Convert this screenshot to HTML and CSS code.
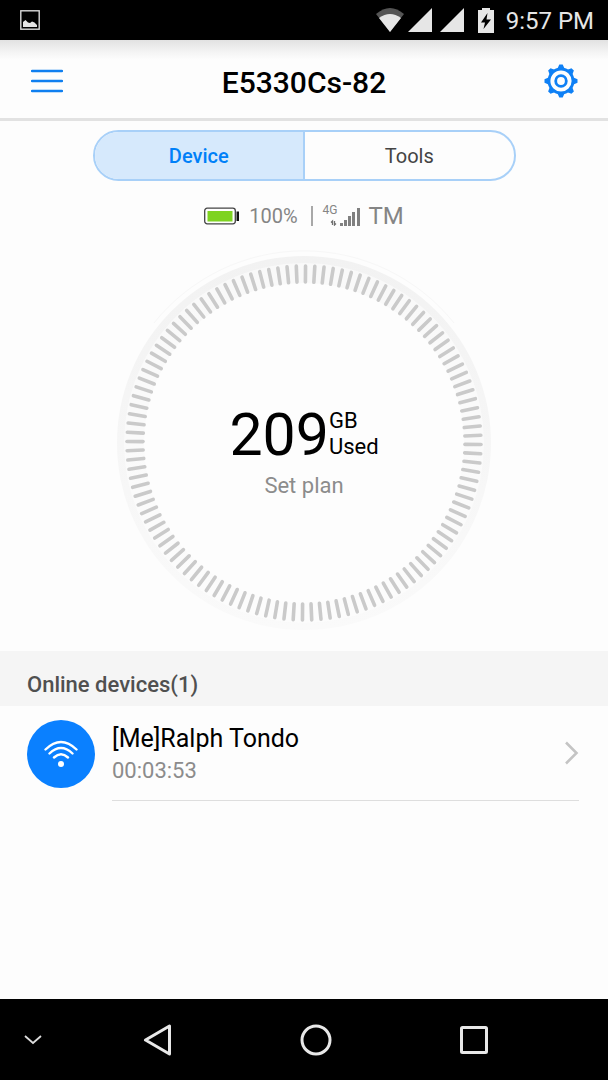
FILE: index.html
```
<!DOCTYPE html>
<html lang="en">
<head>
  <meta charset="UTF-8" />
  <meta name="viewport" content="width=device-width, initial-scale=1.0" />
  <title>E5330Cs-82</title>
  <link rel="stylesheet" href="styles.css">
</head>
<body>
  <div class="status-bar">
    <svg class="notification" width="20" height="20" viewBox="0 0 20 20">
      <rect x="0.8" y="0.8" width="18.4" height="18.4" fill="none" stroke="#d8d8d8" stroke-width="1.4" />
      <path d="M3 17v-5l2.500-2 2.500 2.500 2 .5 2-1.500 2.500 1 2.500 2.500v2z" fill="#e4e4e4" />
    </svg>
    <svg class="wifi" width="28" height="24" viewBox="0 0 28 24">
      <path d="M0 6Q14-6 28 6L14 24z" fill="#555" />
      <path d="M3 10Q14 2 25 10L14 24z" fill="#e6e6e6" />
    </svg>
    <svg width="24" height="24" viewBox="0 0 24 24"><path d="M24 0v24H0z" fill="#e6e6e6" /></svg>
    <svg width="24" height="24" viewBox="0 0 24 24"><path d="M24 0v24H0z" fill="#e6e6e6" /></svg>
    <svg class="battery" width="16" height="25" viewBox="0 0 16 25">
      <path d="M4 0h8v2h4v23H0V2h4z" fill="#e6e6e6" />
      <path d="M9.500 5L3 14.500h4L5.500 21 13 11.500H8.500z" fill="#000" />
    </svg>
    <span class="clock">9:57 PM</span>
  </div>

  <header class="app-header">
    <button class="icon-btn" aria-label="Menu">
      <svg width="32" height="26" viewBox="0 0 32 26">
        <path d="M1 3h30M1 13h30M1 23h30" stroke="#0f7ff0" stroke-width="2.400" stroke-linecap="round" />
      </svg>
    </button>
    <h1>E5330Cs-82</h1>
    <button class="icon-btn" aria-label="Settings">
      <svg width="34" height="34" viewBox="-17 -17 34 34" fill="none" stroke="#0f80f5">
        <circle r="12" stroke-width="2.800" />
        <circle r="5.300" stroke-width="2.800" />
        <g fill="#0f80f5" stroke="none">
          <path id="tooth" d="M-3.500-12.500L-1.700-16.500H1.700L3.500-12.500z" />
          <use href="#tooth" transform="rotate(45)" />
          <use href="#tooth" transform="rotate(90)" />
          <use href="#tooth" transform="rotate(135)" />
          <use href="#tooth" transform="rotate(180)" />
          <use href="#tooth" transform="rotate(225)" />
          <use href="#tooth" transform="rotate(270)" />
          <use href="#tooth" transform="rotate(315)" />
        </g>
      </svg>
    </button>
  </header>

  <main>
    <div class="tabs">
      <button class="tab active">Device</button>
      <button class="tab">Tools</button>
    </div>

    <div class="network">
      <svg width="36" height="18" viewBox="0 0 36 18">
        <rect x="0.7" y="1.200" width="30.600" height="15.600" rx="2.500" fill="#fff" stroke="#444" stroke-width="1.300" />
        <rect x="3.500" y="4" width="25" height="10.500" fill="#7ed321" />
        <rect x="32.500" y="4.500" width="2.500" height="9.500" fill="#111" />
      </svg>
      <span class="charge">100%</span>
      <span class="divider"></span>
      <span class="signal">
        <span class="signal-type">4G</span>
        <svg width="38" height="20" viewBox="0 0 38 20">
          <g fill="#808080">
            <rect x="17" y="17" width="3" height="3" />
            <rect x="21" y="14" width="3" height="6" />
            <rect x="25" y="10" width="3" height="10" />
            <rect x="29" y="6" width="3" height="14" />
            <rect x="34" y="2" width="3" height="18" />
          </g>
          <path d="M9.500 19v-4l-1.500 1.500M11.500 15v4l1.500-1.500" fill="none" stroke="#707070" stroke-width="1.300" />
        </svg>
      </span>
      <span class="carrier">TM</span>
    </div>

    <section class="gauge">
      <svg class="dial" viewBox="-190 -190 380 380">
        <defs>
          <linearGradient id="rim" x1="0" y1="0" x2="0" y2="1">
            <stop offset="0" stop-color="#f2f2f2" />
            <stop offset="1" stop-color="#fafafa" />
          </linearGradient>
        </defs>
        <path d="M-150-120A192 192 0 0 1 150-120" fill="none" stroke="#f7f7f7" />
        <circle r="187" fill="url(#rim)" />
        <circle r="180" fill="#fdfdfd" opacity="0.6" />
        <circle r="160" fill="#fdfdfd" />
        <g id="ticks" stroke="#cacaca" stroke-width="3.600" stroke-linecap="round"></g>
      </svg>
      <div class="usage">
        <div class="usage-value">
          <span class="amount">209</span>
          <span class="unit">GB<br>Used</span>
        </div>
        <a class="plan" href="#">Set plan</a>
      </div>
    </section>

    <section class="devices">
      <h2>Online devices(1)</h2>
      <a class="device" href="#">
        <span class="avatar">
          <svg width="36" height="30" viewBox="0 0 36 30" fill="none" stroke="#fff" stroke-width="2.400" stroke-linecap="round">
            <path d="M2.500 10.500Q18-4.500 33.500 10.500M6.500 14.500Q18 3.500 29.500 14.500M11 18.500Q18 12 25 18.500" />
            <circle cx="18" cy="25" r="3" fill="#fff" stroke="none" />
          </svg>
        </span>
        <span class="device-body">
          <span class="device-text">
            <span class="device-name">[Me]Ralph Tondo</span>
            <span class="device-time">00:03:53</span>
          </span>
          <svg width="15" height="24" viewBox="0 0 15 24">
            <path d="M2 1.500L12.500 12 2 22.500" fill="none" stroke="#c4c4c4" stroke-width="2.600" />
          </svg>
        </span>
      </a>
    </section>
  </main>

  <nav class="nav-bar">
    <button aria-label="Hide">
      <svg width="18" height="10" viewBox="0 0 18 10"><path d="M1 1l8 7 8-7" fill="none" stroke="#ddd" stroke-width="1.800" /></svg>
    </button>
    <button aria-label="Back">
      <svg width="30" height="32" viewBox="0 0 30 32"><path d="M26.500 2v28L2.500 16z" fill="none" stroke="#e8e8e8" stroke-width="3" stroke-linejoin="round" /></svg>
    </button>
    <button aria-label="Home">
      <svg width="32" height="32" viewBox="0 0 32 32"><circle cx="16" cy="16" r="14" fill="none" stroke="#e8e8e8" stroke-width="3" /></svg>
    </button>
    <button aria-label="Recent apps">
      <svg width="30" height="30" viewBox="0 0 30 30"><rect x="2.500" y="2.500" width="25" height="25" rx="1" fill="none" stroke="#e8e8e8" stroke-width="3" /></svg>
    </button>
  </nav>

  <script>
    const ticks = document.getElementById('ticks');
    const tickCount = 120;

    for (let i = 0; i < tickCount; i++) {
      const line = document.createElementNS('http://www.w3.org/2000/svg', 'line');
      line.setAttribute('y1', -177);
      line.setAttribute('y2', -161);
      line.setAttribute('transform', 'rotate(' + (i * 360 / tickCount + 0.5) + ')');
      ticks.appendChild(line);
    }
  </script>
</body>
</html>
```
FILE: styles.css
```
* {
  box-sizing: border-box;
  margin: 0;
  padding: 0;
}

body {
  min-height: 100vh;
  display: flex;
  flex-direction: column;
  background-color: #fdfdfd;
  color: #000;
  font-family: Roboto, "Liberation Sans", sans-serif;
}

button {
  background: none;
  border: none;
  font-family: inherit;
  cursor: pointer;
}

a {
  color: inherit;
  text-decoration: none;
}

svg {
  display: block;
  flex-shrink: 0;
}

.status-bar {
  display: flex;
  align-items: center;
  gap: 8px;
  height: 40px;
  padding: 0 14px 0 20px;
  background-color: #000;
}

.notification {
  margin-right: auto;
}

.wifi {
  margin-right: -4px;
}

.battery {
  margin: 0 4px 0 6px;
}

.clock {
  padding-top: 2px;
  color: #e6e6e6;
  font-size: 24px;
}

.app-header {
  display: flex;
  align-items: center;
  justify-content: space-between;
  height: 81px;
  padding: 4px 28px 0;
  background: linear-gradient(#e2e2e2, #f4f4f4 12px, #fdfdfd 20px);
  border-bottom: 3px solid #e2e2e2;
}

.icon-btn {
  width: 38px;
  height: 38px;
  display: flex;
  align-items: center;
  justify-content: center;
}

.app-header h1 {
  padding-top: 2px;
  font-size: 30px;
  font-weight: 500;
}

main {
  flex: 1;
}

.tabs {
  display: flex;
  max-width: 423px;
  height: 51px;
  margin: 9px auto 0;
  border: 2px solid #a8d0f8;
  border-radius: 26px;
  overflow: hidden;
}

.tab {
  flex: 1;
  color: #444;
  font-size: 20px;
}

.tab.active {
  background-color: #d6e9fc;
  border-right: 2px solid #a8d0f8;
  color: #0080f8;
  font-weight: 500;
}

.network {
  display: flex;
  align-items: center;
  justify-content: center;
  height: 30px;
  margin-top: 20px;
  color: #858585;
}

.charge {
  margin-left: 9px;
  font-size: 20px;
}

.divider {
  width: 2px;
  height: 20px;
  margin: 0 10px 0 13px;
  background-color: #a8a8a8;
}

.signal {
  position: relative;
}

.signal-type {
  position: absolute;
  top: -3px;
  left: 0;
  font-size: 12px;
}

.carrier {
  margin-left: 8px;
  font-size: 24px;
}

.gauge {
  display: grid;
  place-items: center;
  margin-top: 22px;
}

.dial,
.usage {
  grid-area: 1 / 1;
}

.dial {
  width: 100%;
  max-width: 380px;
  overflow: visible;
}

.usage {
  padding-top: 16px;
  text-align: center;
}

.usage-value {
  display: flex;
  align-items: center;
  justify-content: center;
}

.amount {
  font-size: 59px;
  line-height: 70px;
}

.unit {
  padding-bottom: 2px;
  font-size: 22px;
  line-height: 26px;
  text-align: left;
}

.plan {
  color: #8c8c8c;
  font-size: 22px;
  line-height: 32px;
}

.devices {
  margin-top: 18px;
}

.devices h2 {
  height: 55px;
  padding: 12px 27px 0;
  background-color: #f5f5f5;
  color: #505050;
  font-size: 22px;
  font-weight: 500;
  line-height: 44px;
}

.device {
  display: flex;
  gap: 17px;
  padding: 0 29px 0 27px;
}

.avatar {
  display: flex;
  align-items: center;
  justify-content: center;
  width: 68px;
  height: 68px;
  margin-top: 14px;
  border-radius: 50%;
  background-color: #0a80ff;
}

.device-body {
  flex: 1;
  display: flex;
  align-items: center;
  justify-content: space-between;
  height: 95px;
  border-bottom: 1px solid #dedede;
}

.device-text {
  padding-top: 2px;
}

.device-name {
  display: block;
  font-size: 25px;
  line-height: 34px;
}

.device-time {
  display: block;
  color: #8c8c8c;
  font-size: 22px;
  line-height: 30px;
}

.nav-bar {
  display: grid;
  grid-template-columns: 11% 30% 22% 30%;
  align-items: center;
  height: 81px;
  background-color: #000;
}

.nav-bar button {
  display: flex;
  justify-content: center;
}
```
